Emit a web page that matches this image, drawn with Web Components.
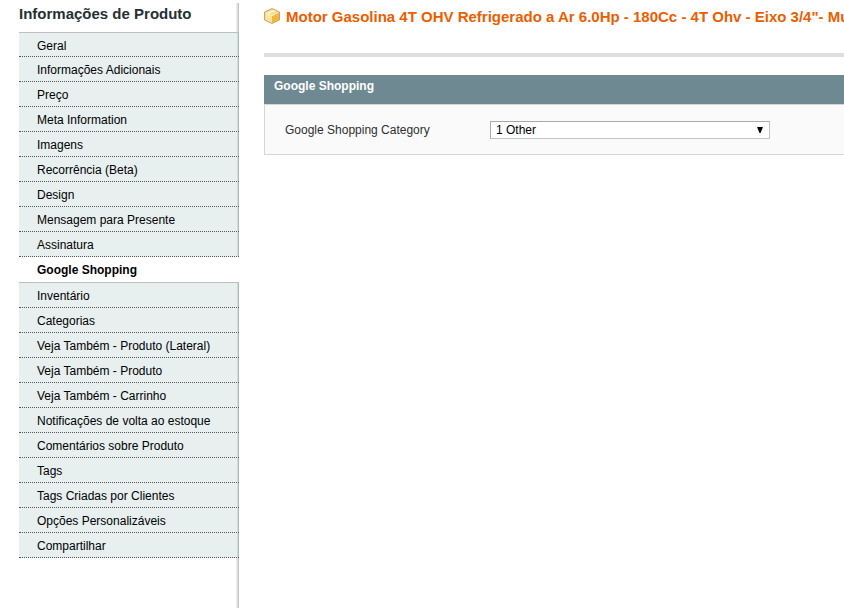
<!DOCTYPE html>
<html lang="pt-BR">
<head>
<meta charset="utf-8">
<title>Informações de Produto</title>
<style>
    body {
        margin: 0;
        background: #fff;
        font: 12px/16px "Liberation Sans", Arial, sans-serif;
        color: #2f2f2f;
    }
</style>
</head>
<body>
<product-page>
    <product-tabs slot="side" heading="Informações de Produto">
        <product-tab>Geral</product-tab>
        <product-tab>Informações Adicionais</product-tab>
        <product-tab>Preço</product-tab>
        <product-tab>Meta Information</product-tab>
        <product-tab>Imagens</product-tab>
        <product-tab>Recorrência (Beta)</product-tab>
        <product-tab>Design</product-tab>
        <product-tab>Mensagem para Presente</product-tab>
        <product-tab>Assinatura</product-tab>
        <product-tab active>Google Shopping</product-tab>
        <product-tab>Inventário</product-tab>
        <product-tab>Categorias</product-tab>
        <product-tab>Veja Também - Produto (Lateral)</product-tab>
        <product-tab>Veja Também - Produto</product-tab>
        <product-tab>Veja Também - Carrinho</product-tab>
        <product-tab>Notificações de volta ao estoque</product-tab>
        <product-tab>Comentários sobre Produto</product-tab>
        <product-tab>Tags</product-tab>
        <product-tab>Tags Criadas por Clientes</product-tab>
        <product-tab>Opções Personalizáveis</product-tab>
        <product-tab>Compartilhar</product-tab>
    </product-tabs>
    <content-header>Motor Gasolina 4T OHV Refrigerado a Ar 6.0Hp - 180Cc - 4T Ohv - Eixo 3/4"- Mult</content-header>
    <form-section heading="Google Shopping">
        <select-field label="Google Shopping Category" value="1 Other"></select-field>
    </form-section>
</product-page>

<script>
class ProductPage extends HTMLElement {
    constructor() {
        super();
        this.attachShadow({mode : "open"});
    }

    static get styles() {
        return `
            :host {
                display: grid;
                grid-template-columns: 220px minmax(0, 1fr);
                column-gap: 25px;
                box-sizing: border-box;
                min-height: 100vh;
                padding: 3px 0 4px 19px;
                overflow: hidden;
            }

            aside {
                display: grid;
            }
        `;
    }

    connectedCallback() {
        this.shadowRoot.innerHTML =
        `
            <style>${ProductPage.styles}</style>
            <aside><slot name="side"></slot></aside>
            <main><slot></slot></main>
        `;
    }
}

class ProductTabs extends HTMLElement {
    constructor() {
        super();
        this.attachShadow({mode : "open"});
    }

    static get styles() {
        return `
            :host {
                display: block;
                background: linear-gradient(to right, #ededed 1px, #dfdfdf 1px 2px, #c4c4c4 2px) right / 3px 100% no-repeat;
            }

            h3 {
                margin: 0;
                padding-bottom: 8px;
                font-size: 15px;
                line-height: 21px;
                color: #253033;
            }
        `;
    }

    connectedCallback() {
        this.shadowRoot.innerHTML =
        `
            <style>${ProductTabs.styles}</style>
            <h3>${this.getAttribute("heading")}</h3>
            <nav><slot></slot></nav>
        `;
    }
}

class ProductTab extends HTMLElement {
    constructor() {
        super();
        this.attachShadow({mode : "open"});
    }

    static get styles() {
        return `
            :host {
                display: block;
            }

            a {
                display: block;
                box-sizing: border-box;
                height: 25px;
                padding: 5px 18px 0;
                border-bottom: 1px dotted #555;
                background: linear-gradient(to right, #cddddd 1px, #a8bfbf 1px) right / 2px 100% no-repeat #e7efef;
                color: #000;
                text-decoration: none;
                white-space: nowrap;
            }

            :host(:first-child) a {
                border-top: 1px solid #bebebe;
            }

            :host([active]) a {
                height: 26px;
                border-bottom: 1px solid #bebebe;
                background: #fff;
                font-weight: bold;
            }
        `;
    }

    connectedCallback() {
        this.shadowRoot.innerHTML =
        `
            <style>${ProductTab.styles}</style>
            <a href="#"><slot></slot></a>
        `;
    }
}

class ContentHeader extends HTMLElement {
    constructor() {
        super();
        this.attachShadow({mode : "open"});
    }

    static get styles() {
        return `
            :host {
                display: block;
                height: 50px;
                margin-bottom: 18px;
                border-bottom: 4px solid #dfdfdf;
            }

            h1 {
                display: flex;
                gap: 6px;
                margin: 0;
                padding-top: 4px;
                font-size: 15px;
                line-height: 20px;
                color: #eb5e00;
                white-space: nowrap;
            }

            svg {
                flex: none;
                margin-top: 1px;
            }
        `;
    }

    connectedCallback() {
        this.shadowRoot.innerHTML =
        `
            <style>${ContentHeader.styles}</style>
            <h1>
                <svg width="16" height="16" viewBox="0 0 16 16" aria-hidden="true">
                    <path d="M8 .6 15.400 4v8L8 15.400.6 12V4z" fill="#f6d27a" stroke="#c79a4e"/>
                    <path d="M8 1.200 14.800 4.300 8 7.600 1.200 4.300z" fill="#f9dc8d"/>
                    <path d="M1.200 4.500 8 7.800v7L1.200 11.700z" fill="#fbe39b"/>
                    <path d="M8 7.800l6.800-3.300v7.200L8 14.800z" fill="#efb940"/>
                    <path d="M9.500 1.900 3.500 4.800v2.400l2 1V5.800L11.500 2.900z" fill="#fff6d8"/>
                    <path d="M1.500 4.600 8 7.700l6.500-3.100" fill="none" stroke="#fff0bb"/>
                </svg>
                <slot></slot>
            </h1>
        `;
    }
}

class FormSection extends HTMLElement {
    constructor() {
        super();
        this.attachShadow({mode : "open"});
    }

    static get styles() {
        return `
            :host {
                display: block;
            }

            h4 {
                margin: 0;
                padding: 3px 10px 10px;
                background: #6f8992;
                color: #fff;
                font-size: 12px;
                line-height: 16px;
            }

            .fields {
                padding: 16px 20px 15px;
                border: 1px solid #d6d6d6;
                border-right: 0;
                background: #fafafa;
            }
        `;
    }

    connectedCallback() {
        this.shadowRoot.innerHTML =
        `
            <style>${FormSection.styles}</style>
            <section>
                <h4>${this.getAttribute("heading")}</h4>
                <div class="fields"><slot></slot></div>
            </section>
        `;
    }
}

class SelectField extends HTMLElement {
    constructor() {
        super();
        this.attachShadow({mode : "open"});
    }

    static get styles() {
        return `
            :host {
                display: flex;
            }

            label {
                width: 205px;
                line-height: 18px;
            }

            .control {
                position: relative;
                width: 280px;
            }

            select {
                display: block;
                appearance: none;
                box-sizing: border-box;
                width: 100%;
                height: 18px;
                margin: 0;
                padding: 0 20px 0 5px;
                border: 1px solid #c3c3c3;
                border-top-color: #aaa;
                border-left-color: #aaa;
                border-radius: 0;
                background: #fff;
                color: #000;
                font: inherit;
            }

            svg {
                position: absolute;
                top: 6px;
                right: 7px;
                pointer-events: none;
            }
        `;
    }

    connectedCallback() {
        this.shadowRoot.innerHTML =
        `
            <style>${SelectField.styles}</style>
            <label for="field">${this.getAttribute("label")}</label>
            <div class="control">
                <select id="field"><option>${this.getAttribute("value")}</option></select>
                <svg width="6" height="6" viewBox="0 0 6 6" aria-hidden="true"><path d="M0 0h6L3.500 6h-1z"/></svg>
            </div>
        `;
    }
}

customElements.define("product-page", ProductPage);
customElements.define("product-tabs", ProductTabs);
customElements.define("product-tab", ProductTab);
customElements.define("content-header", ContentHeader);
customElements.define("form-section", FormSection);
customElements.define("select-field", SelectField);
</script>
</body>
</html>
